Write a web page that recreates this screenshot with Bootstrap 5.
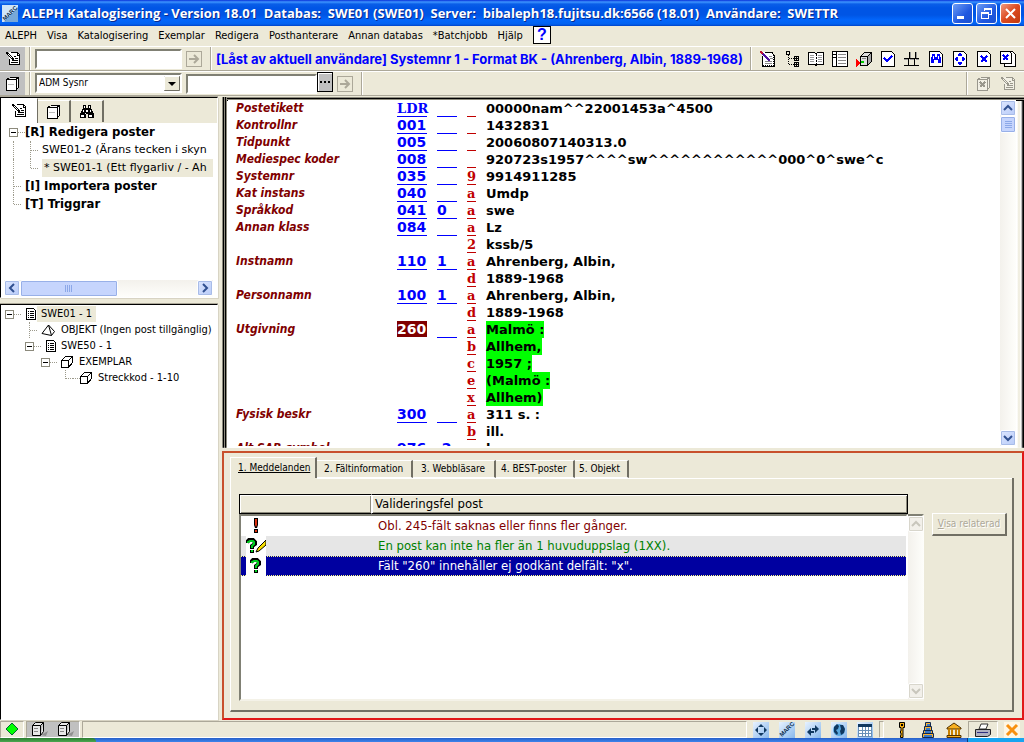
<!DOCTYPE html>
<html lang="sv">
<head>
<meta charset="utf-8">
<meta name="viewport" content="width=device-width, initial-scale=1">
<title>ALEPH Katalogisering</title>
<link rel="stylesheet" href="https://cdn.jsdelivr.net/npm/bootstrap@5.3.0/dist/css/bootstrap.min.css">
<style>
  :root { --face:#ece9d8; --shade:#aca899; --dark:#716f64; --ui:"DejaVu Sans Condensed","DejaVu Sans",sans-serif; }
  body { background:var(--face); color:#000; font-family:var(--ui); font-size:11px; line-height:16px; }
  button, input, select { font:inherit; color:inherit; border-radius:0; }
  svg { display:block; flex:none; }
  svg.px { shape-rendering:crispEdges; }
  svg text { font:bold 6px "Liberation Sans",sans-serif; fill:#103050; }

  /* window caption */
  .caption { height:26px; background:linear-gradient(#0831d9 0,#3d95ff 2px,#0a5ee8 4px,#0055e5 8px,#0055e5 15px,#0266fb 20px,#0262f0 24px,#0043c8 26px); padding:0 3px 0 2px; color:#fff; }
  .caption h1 { font:bold 13px/26px "Open Sans",sans-serif; white-space:pre; text-shadow:1px 1px #0a2a8c; margin:0; }
  .cap-set { gap:3px; }
  .cap-btn { width:21px; height:21px; padding:0; border:1px solid #fff; border-radius:3px; background:linear-gradient(135deg,#6c9cf5,#2058e0 60%,#1a50d0); display:grid; place-items:center; }
  .cap-btn.shut { background:linear-gradient(135deg,#f09a80,#dc4a20 50%,#c03a10); }

  .menubar { height:20px; padding-left:5px; gap:10px; }
  .menubar a { color:#000; text-decoration:none; line-height:19px; }
  .help { width:18px; height:18px; border:1px solid #000; background:#fff; color:#00f; font:bold 16px/16px "Liberation Sans",sans-serif; padding:0; }

  .strip { height:25px; border-top:1px solid #fff; border-bottom:1px solid var(--shade); }
  .strip .grab { width:25px; background:#c0c0c0; display:grid; place-items:center; }
  .rule { width:2px; border-left:1px solid var(--shade); border-right:1px solid #fff; }
  .sunk { border:2px solid; border-color:#808074 #fff #fff #808074; background:#fff; outline:0; min-width:0; padding:0 2px; height:20px; margin-top:2px; }
  select.sunk { margin-top:1px; appearance:none; background:#fff url("data:image/svg+xml,%3Csvg xmlns='http://www.w3.org/2000/svg' width='16' height='15'%3E%3Cpath fill='%23ece9d8' stroke='%23716f64' d='M.5.5h15v14H.5z'/%3E%3Cpath stroke='%23fff' fill='none' d='M.5 14V.5H15'/%3E%3Cpath d='M4 6h8L8 10z'/%3E%3C/svg%3E") no-repeat right center; font-size:10px; line-height:16px; }
  .go { width:16px; height:16px; padding:0; border:1px solid var(--shade); background:var(--face); display:grid; place-items:center; }
  .dots { width:16px; height:20px; padding:0; border:1px solid #000; background:#c0c0c0; display:grid; place-items:center; box-shadow:inset 1px 1px #fff; }
  .status-msg { color:#00f; font:bold 13px/24px Inter,sans-serif; white-space:nowrap; }
  .tool { border:0; background:none; padding:0; width:16px; height:16px; }
  .off { opacity:.35; }

  /* panes */
  main { min-height:0; padding-top:1px; }
  .side { width:218px; gap:6px; }
  .pane { border:1px solid; border-color:#000 #fff #fff #000; box-shadow:0 -1px var(--shade), 1px 1px #d8d4c4; overflow:hidden; min-height:0; }
  .mini-tabs { height:25px; background:var(--face); }
  .mini-tabs button { border:0; border-right:2px solid var(--dark); border-top:1px solid #fff; background:var(--face); width:33px; height:22px; margin-top:2px; display:grid; place-items:center; padding:0; }
  .mini-tabs button.on { background:#fff; width:37px; height:25px; margin:0; border-right-width:1px; }
  .tree { list-style:none; margin:0; padding:0; white-space:nowrap; }
  .tree li > div { display:flex; align-items:center; }
  .marc-tree { font:11px/18px "DejaVu Sans",sans-serif; overflow:hidden; margin-right:4px; }
  .marc-tree b { font:bold 13px/18px var(--ui); }
  .marc-tree .picked { background:var(--face); flex:1 0 auto; padding-left:2px; }
  .guide { width:1px; align-self:stretch; border-left:1px dotted #9c9a8c; flex:none; }
  .half { height:9px; align-self:flex-start; }
  .arm { width:7px; border-top:1px dotted #9c9a8c; flex:none; }
  .box { width:9px; height:9px; border:1px solid #8c8a7c; background:#fff linear-gradient(#000,#000) center/5px 1px no-repeat; flex:none; }
  .obj-tree { line-height:16px; padding-top:1px; }
  .obj-tree .tag { padding:0 4px; }
  .obj-tree .wide { padding-left:6px; }
  .obj-tree .picked { background:var(--face); }

  .sb-v { width:16px; background:linear-gradient(90deg,#f3f1ec,#fefefb); }
  .sb-h { height:17px; background:linear-gradient(#f3f1ec,#fefefb); margin:0 4px 0 3px; }
  .sb-btn { border:1px solid #fff; outline:1px solid #a8bce8; outline-offset:-2px; background:linear-gradient(135deg,#dce6ff,#b8cbf8); padding:0; display:grid; place-items:center; width:16px; height:16px; border-radius:2px; }
  .sb-thumb { border:1px solid #fff; box-shadow:inset 0 0 0 1px #98b0e8; background:#c6d5fd; border-radius:2px; display:grid; place-items:center; }
  .sb-off { background:#f2f0ea; outline-color:#d8d6cc; }
  .live { color:#305090; }

  /* record editor */
  .frame { flex:345 1 0; background:repeating-linear-gradient(90deg,#8c8a7c 0 1px,#000 1px 2px) left/5px 100% no-repeat, linear-gradient(#8c8a7c 0 1px,#000 1px 2px,#8c8a7c 2px 3px,#000 3px) top/100% 4px no-repeat, linear-gradient(90deg,#fff,#ece9d8 2px,#fff 4px,#000 6px) right/7px 100% no-repeat, #fff; padding:3px 8px 2px 6px; min-height:0; }
  .record { border-collapse:separate; border-spacing:0; background:#fff; width:100%; table-layout:fixed; }
  .record th, .record td { padding:0; height:17px; line-height:17px; vertical-align:top; white-space:nowrap; }
  .record th { padding-left:8px; font:italic bold 12px/17px var(--ui); color:#800000; }
  .record td { font:bold 13px/17px "DejaVu Sans",sans-serif; }
  .record .code { color:#00f; font:bold 14px/17px "DejaVu Sans",sans-serif; }
  .record .code.sub, .record .code.alpha { font-family:"DejaVu Serif",serif; font-size:13px; }
  .record .code.sub { color:#c00000; }
  .code span { display:block; height:17px; border-bottom:1px solid; margin-right:10px; }
  .record .code .hot { background:#800000; color:#fff; border-color:#fff; }
  mark.hit { background:#0f0; padding:0; color:#000; display:inline-block; height:17px; }

  /* messages */
  .msg { flex:257 1 0; border:2px solid #c8502c; border-right-color:#e01818; border-bottom-color:#e01818; padding:2px 8px 6px 6px; min-height:0; }
  .msg-tabs { font-size:10px; height:23px; align-items:flex-end; }
  .msg-tabs button { height:18px; padding:0 3px 0 8px; border:0; border-top:1px solid #fff; border-right:2px solid var(--dark); border-bottom:1px solid #fff; background:var(--face); line-height:13px; text-align:left; white-space:nowrap; }
  .msg-tabs button.on { height:21px; border-left:1px solid #fff; border-bottom:0; text-decoration:underline; width:87px; padding:0 0 0 7px; }
  .msg-tabs .w2 { width:96px; padding-left:7px; } .msg-tabs .w3 { width:83px; } .msg-tabs .w4 { width:79px; padding-left:5px; } .msg-tabs .w5 { width:54px; padding-left:4px; }
  .sheet { border:1px solid; border-color:#fff var(--dark) var(--dark) #fff; border-right-width:2px; border-bottom-width:2px; border-top-width:0; padding:16px 5px 9px 8px; gap:8px; min-height:0; background:linear-gradient(#fff,#fff) right top/calc(100% - 86px) 1px no-repeat; }
  .grid-box { display:grid; grid-template:20px 1fr / 1fr 16px; }
  .well { grid-area:2/1/3/3; border:2px solid; border-color:#808074 #f4f2e8 #f4f2e8 #808074; background:#fff; }
  .well-bar { grid-area:2/2; margin:2px 1px 2px 0; color:#c8c6bc; }
  .report { grid-area:1/1/3/2; align-self:start; border-collapse:separate; border-spacing:0; width:100%; table-layout:fixed; font-size:13px; }
  .report th { height:20px; line-height:15px; padding:0 3px; font-weight:normal; border:1px solid #000; border-right:0; background:var(--face); box-shadow:inset 1px 1px #fff, inset -1px -1px #8c8a7c; }
  .report th + th { border-right:1px solid #000; border-left:1px solid #fff; }
  .report td { height:20px; padding:0 0 0 7px; line-height:20px; border-right:2px solid #fff; }
  .report td:first-child { border-left:2px solid #808074; padding-left:5px; border-right:0; }
  .report tbody tr:first-child td { border-top:2px solid #808074; height:22px; }
  .report svg { background:#fff; }
  .report .alt td { background:#e6e6e6; color:#008000; }
  .report .sel td { color:#fff; background:repeating-linear-gradient(90deg,#ffff80 0 1px,#0000a0 1px 2px) top/100% 1px no-repeat, repeating-linear-gradient(90deg,#ffff80 0 1px,#0000a0 1px 2px) bottom/100% 1px no-repeat, #0000a0; background-clip:padding-box; }
  .related { width:75px; height:23px; margin-top:19px; padding:0; border:solid; border-width:1px 2px 2px 1px; border-color:#fff var(--dark) var(--dark) #fff; background:var(--face); color:var(--shade); text-shadow:1px 1px #fff; font-size:10px; line-height:18px; white-space:nowrap; }

  .foot { height:18px; gap:2px; }
  .cell { border:1px solid; border-color:var(--shade) #fff #fff var(--shade); height:17px; }
  .foot-set { gap:10px; }
  .foot-ico { width:16px; height:16px; padding:0; border:0; background:linear-gradient(135deg,#e8f2ff,#88b8ec); display:grid; place-items:center; }
  .foot-ico.bare { background:none; }
  .taskbar { height:4px; }
  .t-start { width:96px; background:linear-gradient(#2c7c30,#4aa850); border-radius:0 4px 0 0; }
  .t-mid { background:linear-gradient(#2860c8,#3c84ec); }
  .t-tray { width:57px; background:#18a4f0; border-left:1px solid #103878; }
</style>
</head>
<body class="vh-100 d-flex flex-column overflow-hidden">

<svg width="0" height="0" class="position-absolute" aria-hidden="true">
  <symbol id="i-edit" viewBox="0 0 16 16"><path fill="#fff" d="M4 1h8l3 3v10H4z"/><path fill="none" stroke="#000" d="M6 1.500h6.500l2 2v10h-10V8M12.500 2v2h2M9 5.500h2M10 7.500h3M7 9.500h6M6 11.500h7"/><path d="M1 1h2v1h1v1h1v1h1v1h1v1h1v1h1v2H7V8H6V7H5V6H4V5H3V4H2V3H1z"/><path fill="#fff" d="M3 3h1v1H3zM4 4h1v1H4zM5 5h1v1H5zM6 6h1v1H6z"/></symbol>
  <symbol id="i-cards" viewBox="0 0 16 16"><path fill="#fff" stroke="#000" d="M4.500 1.500h9v10l-2 2M4.500 1.500l-3 2M1.500 3.500h9.500v11H1.500zM11 3.500l2.500-2"/><path stroke="#bbb" d="M3 8.500h6"/></symbol>
  <symbol id="i-bino" viewBox="0 0 16 16"><path d="M4 1h3v3h2V1h3v3l3 6v4H9v-4H7v4H1v-4l3-6z"/><path fill="#fff" d="M5 2h1v2H5zM10 2h1v2h-1zM4 6h1v2H4zM7 6h2v2H7zM11 6h1v2h-1zM2 11h3v2H2zM10 11h3v2h-3zM6 9h1v1H6z"/></symbol>
  <symbol id="i-arrow" viewBox="0 0 12 12"><path fill="none" stroke="#aca899" stroke-width="2" d="M1 6h9M6 2l4 4-4 4"/></symbol>
  <symbol id="i-up" viewBox="0 0 10 10"><path fill="none" stroke="currentColor" stroke-width="2" d="M1 7l4-4 4 4"/></symbol>
  <symbol id="i-down" viewBox="0 0 10 10"><path fill="none" stroke="currentColor" stroke-width="2" d="M1 3l4 4 4-4"/></symbol>
  <symbol id="i-page" viewBox="0 0 16 16"><path fill="#fff" stroke="#000" d="M1.500.500h10l3 3v12h-13z"/></symbol>
  <symbol id="i-doc" viewBox="0 0 12 12"><path fill="#fff" stroke="#000" d="M1.500.500h7l2 2v9h-9z"/><path stroke="#000" d="M3 3.500h1M5 3.500h4M3 5.500h1M5 5.500h4M3 7.500h1M5 7.500h4M3 9.500h1M5 9.500h4"/></symbol>
  <symbol id="i-cube" viewBox="0 0 12 12"><path fill="#fff" stroke="#000" d="M.500 4.500h7v7h-7zM.500 4.500l4-4h7l-4 4M11.500.500v6l-4 5"/></symbol>
  <symbol id="i-q" viewBox="0 0 12 16"><path fill="none" stroke="#000" stroke-width="4" d="M1 5V4l2-2h4l2 2v2L6 8v3M6 12v3"/><path fill="none" stroke="#00d020" stroke-width="2" d="M2 5V4l2-1h3l1 1v2L6 8v2M6 12v2"/></symbol>
  <symbol id="i-box" viewBox="0 0 18 14"><path fill="#909090" d="M10 13l7-4-2 5z"/><path fill="#e8e8e8" stroke="#000" d="M1.500 3.500h8v10h-8zM1.500 3.500l3-3h8l-3 3M12.500.500v9l-3 4"/><path stroke="#888" d="M3 6.500h4M3 9.500h4"/></symbol>
</svg>

<header class="caption d-flex align-items-center flex-shrink-0">
  <svg width="16" height="17" viewBox="0 0 16 17"><path fill="#cfe4f8" d="M0 0h16v17H0z"/><path fill="#78a8d8" d="M16 2v15H2z"/><text transform="translate(3 16) rotate(-45)">MARC</text></svg>
  <h1 class="ms-1 flex-grow-1">ALEPH Katalogisering - Version 18.01  Databas:  SWE01 (SWE01)  Server:  bibaleph18.fujitsu.dk:6566 (18.01)  Användare:  SWETTR</h1>
  <div class="cap-set d-flex">
    <button class="cap-btn" aria-label="Minimera"><svg class="px" width="13" height="13"><path fill="#fff" d="M1 9h7v3H1z"/></svg></button>
    <button class="cap-btn" aria-label="Återställ"><svg class="px" width="13" height="13"><path fill="none" stroke="#fff" d="M4.500 4V1.500h7v6H9M1.500 5.500h7v6h-7zM4 2.500h8M1 6.500h8"/></svg></button>
    <button class="cap-btn shut" aria-label="Stäng"><svg width="13" height="13"><path stroke="#fff" stroke-width="2" d="M2 2l9 9M11 2l-9 9"/></svg></button>
  </div>
</header>

<nav class="menubar d-flex flex-shrink-0">
  <a href="#">ALEPH</a><a href="#">Visa</a><a href="#">Katalogisering</a><a href="#">Exemplar</a><a href="#">Redigera</a><a href="#">Posthanterare</a><a href="#">Annan databas</a><a href="#">*Batchjobb</a><a href="#">Hjälp</a>
  <button class="help" aria-label="Hjälpfönster">?</button>
</nav>

<div class="strip d-flex flex-shrink-0">
  <div class="grab"><svg class="px" width="16" height="16"><use href="#i-edit"/></svg></div>
  <div class="rule ms-1 me-1"></div>
  <input class="sunk" size="1" aria-label="Systemnummer" style="width:147px">
  <button class="go ms-1 mt-1" aria-label="Hämta post"><svg width="12" height="12"><use href="#i-arrow"/></svg></button>
  <div class="rule ms-2"></div>
  <div class="status-msg ps-1 flex-grow-1">[Låst av aktuell användare] Systemnr 1 - Format BK - (Ahrenberg, Albin, 1889-1968)</div>
  <div class="rule"></div>
  <div class="d-flex align-items-center gap-2 ps-2 pe-2">
    <button class="tool" aria-label="Redigera post"><svg class="px" width="16" height="16"><path fill="#fff" d="M2 1h9l4 3v12H2z"/><path fill="none" stroke="#000" d="M5 1.500h7l2.500 3v11h-12V5"/><path stroke="#000" stroke-dasharray="1 1" d="M13.500 4v11M3 14.500h11"/><path stroke="#888" d="M9 5.500h3M10 7.500h3M5 10.500h7M5 12.500h7"/><path stroke="#c01030" stroke-width="2" d="M0 0l4 4"/><path stroke="#5010a0" stroke-width="2" d="M3 3l7 7"/></svg></button>
    <button class="tool" aria-label="Träd"><svg class="px" width="16" height="16"><path fill="none" stroke="#000" d="M2.500.500h3v3h-3zM10.500 5.500h4v4h-4zM10.500 11.500h4v4h-4zM11 7.500h3M12.500 6v3M11 13.500h3M12.500 12v3"/><path fill="none" stroke="#000" stroke-dasharray="1 1" d="M4.500 4v9.500H10M5 7.500h5"/></svg></button>
    <button class="tool" aria-label="Bok"><svg class="px" width="16" height="16"><path fill="#fff" stroke="#000" d="M.500 1.500h6l1 1h1l1-1h6v12H9l-1 1-1-1H.500z"/><path stroke="#000" stroke-dasharray="2 1" d="M8 3v11"/><path stroke="#999" d="M2 4.500h4M2 6.500h4M2 8.500h4M2 10.500h4M10 4.500h4M10 6.500h4M10 8.500h4M10 10.500h4"/></svg></button>
    <button class="tool" aria-label="Register"><svg class="px" width="16" height="16"><path fill="#fff" stroke="#000" d="M.500.500h15v15H.500zM4.500 1v14M1 3.500h3M1 6.500h3"/><path stroke="#888" d="M6 3.500h8M6 6.500h8M6 9.500h8M6 12.500h8"/></svg></button>
    <button class="tool" aria-label="Skicka till server"><svg class="px" width="16" height="16"><path fill="#e0e0e0" stroke="#000" d="M4.500 5.500h7v9h-7zM4.500 5.500l4-4h7l-4 4"/><path fill="#a8a8a8" stroke="#000" d="M11.500 5.500l4-4v9l-4 4z"/><path stroke="#888" d="M6 7.500h4"/><path fill="#0c0" d="M5 10h3v2H5z"/><path fill="red" d="M0 8l4 4-4 4z"/></svg></button>
    <button class="tool" aria-label="Kontrollera"><svg class="px" width="16" height="16"><use href="#i-page"/><path fill="none" stroke="#00f" stroke-width="2" d="M4 7l3 3 5-5"/></svg></button>
    <button class="tool" aria-label="Dela"><svg class="px" width="16" height="16"><path fill="none" stroke="#000" d="M0 7.500h15M0 14.500h15M5.500 1v6M11.500 1v6M4.500 8v6M10.500 8v6"/><path stroke="#999" d="M0 8.500h4M6 8.500h4M12 8.500h3M6.500 1v6M12.500 1v6"/></svg></button>
    <button class="tool" aria-label="Sök"><svg class="px" width="16" height="16"><use href="#i-page"/><path fill="#00f" d="M4 3h3v3h2V3h3l1 6v3h-3V9H6v3H3V9z"/><path fill="#fff" d="M5 5h1v3H5zM10 5h1v3h-1z"/></svg></button>
    <button class="tool" aria-label="Flytta"><svg class="px" width="16" height="16"><use href="#i-page"/><path fill="#00f" d="M7 2h2v1h1v2H6V3h1zM7 14h2v-1h1v-2H6v2h1zM3 7h1V6h2v4H4V9H3zM13 7h-1V6h-2v4h2V9h1z"/></svg></button>
    <button class="tool" aria-label="Stäng post"><svg class="px" width="16" height="16"><use href="#i-page"/><path stroke="#00f" stroke-width="2" d="M5 5l6 6M11 5l-6 6"/></svg></button>
    <button class="tool" aria-label="Stäng alla"><svg class="px" width="16" height="16"><path fill="#fff" stroke="#000" d="M4.500.500h8l3 3v12h-11z"/><path fill="#fff" stroke="#000" d="M.500.500h9l2 2v10H.500z"/><path stroke="#00f" stroke-width="2" d="M3 4l5 5M8 4L3 9"/></svg></button>
  </div>
</div>

<div class="strip d-flex flex-shrink-0">
  <div class="grab"><svg class="px" width="16" height="16"><use href="#i-cards"/></svg></div>
  <div class="rule ms-1 me-1"></div>
  <select class="sunk" aria-label="Söktyp" style="width:147px"><option>ADM Sysnr</option></select>
  <input class="sunk ms-1" size="1" aria-label="Sökvärde" style="width:131px">
  <button class="dots" aria-label="Bläddra"><svg class="px" width="12" height="3"><path d="M1 0h2v2H1zM5 0h2v2H5zM9 0h2v2H9z"/></svg></button>
  <button class="go ms-1 mt-1" aria-label="Sök ADM"><svg width="12" height="12"><use href="#i-arrow"/></svg></button>
  <div class="rule ms-2"></div>
  <div class="flex-grow-1"></div>
  <div class="rule"></div>
  <div class="off d-flex align-items-center gap-2 px-2">
    <button class="tool" disabled aria-label="Stäng objekt"><svg class="px" width="16" height="16"><use href="#i-cards"/><path stroke="#000" stroke-width="2" d="M4 6l5 5M9 6l-5 5"/></svg></button>
    <button class="tool" disabled aria-label="Redigera objekt"><svg class="px" width="16" height="16"><use href="#i-edit"/></svg></button>
  </div>
</div>

<main class="d-flex flex-grow-1 gap-1">
  <aside class="side d-flex flex-column flex-shrink-0">
    <section class="pane d-flex flex-column bg-white" style="flex:200 1 0">
      <div class="mini-tabs d-flex flex-shrink-0">
        <button class="on" aria-label="Redigering"><svg class="px" width="16" height="16"><use href="#i-edit"/></svg></button>
        <button aria-label="Poster"><svg class="px" width="16" height="16"><use href="#i-cards"/></svg></button>
        <button aria-label="Sök"><svg class="px" width="16" height="16"><use href="#i-bino"/></svg></button>
      </div>
      <ul class="tree marc-tree flex-grow-1">
        <li><div class="ps-2"><span class="box"></span><span class="arm"></span><b>[R] Redigera poster</b></div></li>
        <li><div class="ps-2"><span class="guide ms-1"></span><span class="guide ms-3"></span><span class="arm me-1"></span>SWE01-2 (Ärans tecken i skyn</div></li>
        <li><div class="ps-2"><span class="guide ms-1"></span><span class="guide half ms-3"></span><span class="arm me-1"></span><span class="picked">* SWE01-1 (Ett flygarliv / - Ah</span></div></li>
        <li><div class="ps-2"><span class="guide ms-1"></span><span class="arm me-1"></span><b>[I] Importera poster</b></div></li>
        <li><div class="ps-2"><span class="guide half ms-1"></span><span class="arm me-1"></span><b>[T] Triggrar</b></div></li>
      </ul>
      <div class="sb-h live d-flex flex-shrink-0">
        <button class="sb-btn" aria-label="Vänster"><svg width="10" height="10"><path fill="none" stroke="currentColor" stroke-width="2" d="M7 1L3 5l4 4"/></svg></button>
        <div class="sb-thumb" style="width:47%"><svg class="px" width="9" height="7"><path stroke="#8ca8e8" d="M.500 0v7M2.500 0v7M4.500 0v7M6.500 0v7"/></svg></div>
        <div class="flex-grow-1"></div>
        <button class="sb-btn" aria-label="Höger"><svg width="10" height="10"><path fill="none" stroke="currentColor" stroke-width="2" d="M3 1l4 4-4 4"/></svg></button>
      </div>
    </section>
    <section class="pane bg-white" style="flex:416 1 0">
      <ul class="tree obj-tree">
        <li><div class="ps-1"><span class="box"></span><span class="arm me-1"></span><svg class="px" width="12" height="12"><use href="#i-doc"/></svg><span class="tag picked">SWE01 - 1</span></div></li>
        <li><div class="ps-4"><span class="guide ms-1"></span><span class="arm me-1"></span><svg width="16" height="12"><path fill="#fff" stroke="#000" d="M1 9.500L7.500 1l6 6.500-3 4zM7.500 1l3 10.500"/></svg><span class="tag">OBJEKT (Ingen post tillgänglig)</span></div></li>
        <li><div class="ps-4"><span class="box"></span><span class="arm me-1"></span><svg class="px" width="12" height="12"><use href="#i-doc"/></svg><span class="tag">SWE50 - 1</span></div></li>
        <li><div class="ps-4"><span class="box ms-3"></span><span class="arm me-1"></span><svg class="px" width="12" height="12"><use href="#i-cube"/></svg><span class="tag wide">EXEMPLAR</span></div></li>
        <li><div class="ps-5"><span class="guide half ms-3"></span><span class="arm"></span><span class="arm"></span><svg class="px" width="12" height="12"><use href="#i-cube"/></svg><span class="tag wide">Streckkod - 1-10</span></div></li>
      </ul>
    </section>
  </aside>

  <div class="d-flex flex-column flex-grow-1" style="min-width:0;gap:3px">
    <section class="frame d-flex overflow-hidden">
      <div class="flex-grow-1 overflow-hidden bg-white">
        <table class="record">
          <colgroup><col style="width:169px"><col style="width:40px"><col style="width:30px"><col style="width:19px"><col></colgroup>
          <tbody>
            <tr><th>Postetikett</th><td class="code alpha"><span>LDR</span></td><td class="code"><span></span></td><td class="code sub"><span></span></td><td>00000nam^^22001453a^4500</td></tr>
            <tr><th>Kontrollnr</th><td class="code"><span>001</span></td><td class="code"><span></span></td><td class="code sub"><span></span></td><td>1432831</td></tr>
            <tr><th>Tidpunkt</th><td class="code"><span>005</span></td><td class="code"><span></span></td><td class="code sub"><span></span></td><td>20060807140313.0</td></tr>
            <tr><th>Mediespec koder</th><td class="code"><span>008</span></td><td class="code"><span></span></td><td class="code sub"><span></span></td><td>920723s1957^^^^sw^^^^^^^^^^^^000^0^swe^c</td></tr>
            <tr><th>Systemnr</th><td class="code"><span>035</span></td><td class="code"><span></span></td><td class="code sub"><span>9</span></td><td>9914911285</td></tr>
            <tr><th>Kat instans</th><td class="code"><span>040</span></td><td class="code"><span></span></td><td class="code sub"><span>a</span></td><td>Umdp</td></tr>
            <tr><th>Språkkod</th><td class="code"><span>041</span></td><td class="code"><span>0</span></td><td class="code sub"><span>a</span></td><td>swe</td></tr>
            <tr><th>Annan klass</th><td class="code"><span>084</span></td><td class="code"><span></span></td><td class="code sub"><span>a</span></td><td>Lz</td></tr>
            <tr><th></th><td></td><td></td><td class="code sub"><span>2</span></td><td>kssb/5</td></tr>
            <tr><th>Instnamn</th><td class="code"><span>110</span></td><td class="code"><span>1</span></td><td class="code sub"><span>a</span></td><td>Ahrenberg, Albin,</td></tr>
            <tr><th></th><td></td><td></td><td class="code sub"><span>d</span></td><td>1889-1968</td></tr>
            <tr><th>Personnamn</th><td class="code"><span>100</span></td><td class="code"><span>1</span></td><td class="code sub"><span>a</span></td><td>Ahrenberg, Albin,</td></tr>
            <tr><th></th><td></td><td></td><td class="code sub"><span>d</span></td><td>1889-1968</td></tr>
            <tr><th>Utgivning</th><td class="code"><span class="hot">260</span></td><td class="code"><span></span></td><td class="code sub"><span>a</span></td><td><mark class="hit">Malmö :</mark></td></tr>
            <tr><th></th><td></td><td></td><td class="code sub"><span>b</span></td><td><mark class="hit">Allhem,</mark></td></tr>
            <tr><th></th><td></td><td></td><td class="code sub"><span>c</span></td><td><mark class="hit">1957 ;</mark></td></tr>
            <tr><th></th><td></td><td></td><td class="code sub"><span>e</span></td><td><mark class="hit">(Malmö :</mark></td></tr>
            <tr><th></th><td></td><td></td><td class="code sub"><span>x</span></td><td><mark class="hit">Allhem)</mark></td></tr>
            <tr><th>Fysisk beskr</th><td class="code"><span>300</span></td><td class="code"><span></span></td><td class="code sub"><span>a</span></td><td>311 s. :</td></tr>
            <tr><th></th><td></td><td></td><td class="code sub"><span>b</span></td><td>ill.</td></tr>
            <tr><th>Alt SAB-symbol</th><td class="code"><span>976</span></td><td class="code"><span>&nbsp;2</span></td><td class="code sub"><span></span></td><td>b</td></tr>
          </tbody>
        </table>
      </div>
      <div class="sb-v live d-flex flex-column flex-shrink-0">
        <button class="sb-btn" aria-label="Upp"><svg width="10" height="10"><use href="#i-up"/></svg></button>
        <div class="sb-thumb" style="height:5%"><svg class="px" width="7" height="8"><path stroke="#8ca8e8" d="M0 .500h7M0 2.500h7M0 4.500h7M0 6.500h7"/></svg></div>
        <div class="flex-grow-1"></div>
        <button class="sb-btn" aria-label="Ned"><svg width="10" height="10"><use href="#i-down"/></svg></button>
      </div>
    </section>

    <section class="msg d-flex flex-column">
      <div class="msg-tabs d-flex flex-shrink-0">
        <button class="on">1. Meddelanden</button><button class="w2">2. Fältinformation</button><button class="w3">3. Webbläsare</button><button class="w4">4. BEST-poster</button><button class="w5">5. Objekt</button>
      </div>
      <div class="sheet d-flex flex-grow-1">
        <div class="grid-box flex-grow-1">
          <div class="well"></div>
          <table class="report">
            <colgroup><col style="width:132px"><col></colgroup>
            <thead><tr><th></th><th>Valideringsfel post</th></tr></thead>
            <tbody style="color:#800000">
              <tr><td><svg width="20" height="20"><path d="M8 2h4v7l-1 3H9L8 9zM8 13h4v4H8z"/><path fill="#d83010" d="M9 3h2v6l-1 2-1-2zM9 14h2v2H9z"/></svg></td><td>Obl. 245-fält saknas eller finns fler gånger.</td></tr>
              <tr class="alt"><td><svg width="20" height="20"><use href="#i-q" x="0" y="2" width="12" height="16"/><path fill="#f8e000" stroke="#000" d="M10 16l2-4 8-8v5l-7 6z"/></svg></td><td>En post kan inte ha fler än 1 huvuduppslag (1XX).</td></tr>
              <tr class="sel"><td><svg width="20" height="20"><use href="#i-q" x="4" y="2" width="12" height="16"/></svg></td><td>Fält "260" innehåller ej godkänt delfält: "x".</td></tr>
            </tbody>
          </table>
          <div class="sb-v well-bar d-flex flex-column">
            <button class="sb-btn sb-off" disabled aria-label="Upp"><svg width="10" height="10"><use href="#i-up"/></svg></button>
            <div class="flex-grow-1"></div>
            <button class="sb-btn sb-off" disabled aria-label="Ned"><svg width="10" height="10"><use href="#i-down"/></svg></button>
          </div>
        </div>
        <button class="related flex-shrink-0" disabled><u>V</u>isa relaterad</button>
      </div>
    </section>
  </div>
</main>

<footer class="foot d-flex align-items-end flex-shrink-0">
  <div class="cell px-1" style="width:24px"><svg width="14" height="14"><path fill="#0f0" stroke="#063" d="M7 1l6 6-6 6-6-6z"/></svg></div>
  <div class="cell d-flex gap-2 px-1" style="width:54px;background:#c0c0c0"><svg width="18" height="14"><use href="#i-box"/></svg><svg width="18" height="14"><use href="#i-box"/></svg></div>
  <div class="cell flex-grow-1"></div>
  <div class="foot-set d-flex ps-1 pe-1">
    <button class="foot-ico" aria-label="Flytta"><svg width="14" height="14"><path fill="#103860" d="M7 1l3 3H4zM7 13l3-3H4zM1 7l3-3v6zM13 7l-3-3v6z"/></svg></button>
    <button class="foot-ico" aria-label="MARC"><svg width="16" height="16"><text transform="translate(3 15) rotate(-45)">MARC</text></svg></button>
    <button class="foot-ico" aria-label="Byt"><svg width="14" height="14"><path fill="#103860" d="M6 5h3V2l4 4-4 4V7H6zM8 8H5V5L1 9l4 4v-3h3z"/></svg></button>
    <button class="foot-ico" aria-label="Webb"><svg width="14" height="14"><circle cx="7" cy="7" r="6" fill="#58a8e0"/><path fill="#103860" d="M2 4l3-3 2 2-1 3-2 1 2 3-1 2-3-3zM8 2l3 0 2 4-1 4-3 2-1-4 1-2z"/></svg></button>
    <button class="foot-ico" aria-label="Tabell"><svg class="px" width="14" height="14"><path fill="#fff" stroke="#6890b8" d="M.500 1.500h13v12H.500zM4 4v9M7.500 4v9M10.500 4v9M1 7.500h13M1 10.500h13"/><path fill="#103860" d="M0 1h14v3H0z"/></svg></button>
  </div>
  <div class="cell" style="width:5px"></div>
  <div class="foot-set d-flex ps-2">
    <button class="foot-ico bare" aria-label="Nyckel"><svg width="16" height="16"><path fill="#f8b010" stroke="#000" d="M5.500.500h5v5H9v10H6.500v-2H7V11H6.500V9H7V5.500H5.500z"/><path fill="#000" d="M7 2h2v2H7z"/></svg></button>
    <button class="foot-ico bare" aria-label="Bas"><svg width="14" height="16"><path fill="#f8b030" stroke="#102850" d="M4.500.500h5v4h-5zM3.500 4.500h7v4h-7zM2.500 8.500h9v3h-9zM1.500 11.500h11v4h-11z"/><path stroke="#3878c8" stroke-width="2" d="M6 3h3M5 7h4M4 10h6M3 14h8"/></svg></button>
    <button class="foot-ico bare" aria-label="Bibliotek"><svg width="16" height="16"><path fill="#f8b020" stroke="#503000" d="M8 1l7 5v1H1V6zM1 13.500h14v2H1z"/><path stroke="#c88000" stroke-width="2" d="M3 7v6M6 7v6M10 7v6M13 7v6"/></svg></button>
  </div>
  <button class="cell ms-1 p-0 d-grid" style="width:30px;background:none;place-items:center" aria-label="Skriv ut"><svg width="18" height="14"><path fill="#fff" stroke="#333" d="M5 6l2-5h7l-2 5z"/><path fill="#b0b0c0" stroke="#222" d="M1.500 6.500h15v5l-3 2h-12z"/><path stroke="#303080" d="M3 9.500h11"/></svg></button>
  <button class="foot-ico ms-1 me-1" style="background:#fff6e4" aria-label="Avsluta"><svg width="14" height="14"><path stroke="#f89010" stroke-width="3" d="M2 2l10 10M12 2L2 12"/></svg></button>
</footer>
<div class="taskbar d-flex flex-shrink-0"><div class="t-mid flex-grow-1"><div class="t-start h-100"></div></div><div class="t-tray"></div></div>

<script src="https://cdn.jsdelivr.net/npm/bootstrap@5.3.0/dist/js/bootstrap.bundle.min.js"></script>
</body>
</html>
